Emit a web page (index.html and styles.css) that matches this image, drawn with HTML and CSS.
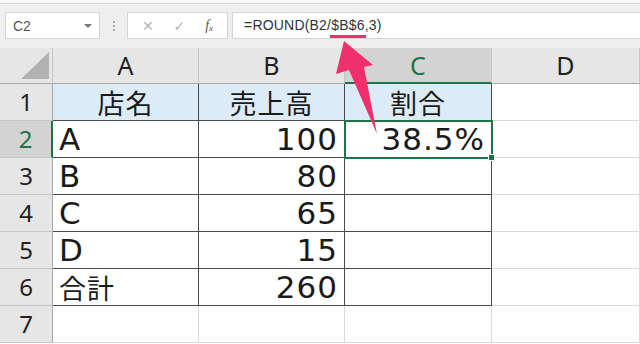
FILE: index.html
```html
<!DOCTYPE html>
<html lang="ja">
<head>
<meta charset="UTF-8"/>
<title>ROUND</title>
<link rel="stylesheet" href="styles.css">
</head>
<body>
<div class="app">
  <div class="bar">
    <div class="namebox"><span>C2</span><i class="drop"></i></div>
    <div class="grip"><b></b><b></b><b></b></div>
    <div class="btns">
      <span class="ic">&#x2715;</span>
      <span class="ic">&#x2713;</span>
      <span class="fx">f<sub>x</sub></span>
    </div>
    <div class="formula">=ROUND(B2/<u>$B$6</u>,3)</div>
  </div>

  <div class="sheet">
    <div class="hd corner"><i class="tri"></i></div>
    <div class="hd">A</div>
    <div class="hd">B</div>
    <div class="hd sel-col">C</div>
    <div class="hd">D</div>

    <div class="rh">1</div>
    <div class="c t head jp ctr">店名</div>
    <div class="c t head jp ctr">売上高</div>
    <div class="c t head jp ctr">割合</div>
    <div class="c"></div>

    <div class="rh sel-row">2</div>
    <div class="c t">A</div>
    <div class="c t num">100</div>
    <div class="c t num active">38.5%</div>
    <div class="c"></div>

    <div class="rh">3</div>
    <div class="c t">B</div>
    <div class="c t num">80</div>
    <div class="c t"></div>
    <div class="c"></div>

    <div class="rh">4</div>
    <div class="c t">C</div>
    <div class="c t num">65</div>
    <div class="c t"></div>
    <div class="c"></div>

    <div class="rh">5</div>
    <div class="c t">D</div>
    <div class="c t num">15</div>
    <div class="c t"></div>
    <div class="c"></div>

    <div class="rh">6</div>
    <div class="c t jp">合計</div>
    <div class="c t num">260</div>
    <div class="c t"></div>
    <div class="c"></div>

    <div class="rh">7</div>
    <div class="c"></div>
    <div class="c"></div>
    <div class="c"></div>
    <div class="c"></div>
  </div>

  <svg class="arrow" width="640" height="344" viewBox="0 0 640 344">
    <polygon points="344,41 373,65 364,67 377,134 349,70 336,74" fill="#f0306c"/>
  </svg>
</div>
</body>
</html>
```

FILE: styles.css
```css
*{box-sizing:border-box;margin:0;padding:0}
body{background:#fff;font-family:'Noto Sans','Noto Sans CJK JP',sans-serif;width:640px;height:344px;overflow:hidden}
.app{position:relative;width:640px;height:344px}

/* formula bar */
.bar{height:48px;background:#efefef;border-top:3px solid #f8f8f8;box-shadow:inset 0 1px 0 #d8d8d8;display:flex;align-items:flex-start;padding-top:9px}
.namebox{margin-left:5px;width:95px;height:27px;background:#fff;border:1px solid #d4d4d4;display:flex;align-items:center;justify-content:space-between;padding:0 7px 0 7px;font-family:'Liberation Sans',sans-serif;font-size:14px;color:#555}
.drop{width:0;height:0;border-left:4px solid transparent;border-right:4px solid transparent;border-top:4px solid #777}
.grip{width:27px;height:27px;display:flex;flex-direction:column;align-items:center;justify-content:center;gap:2px}
.grip b{width:2px;height:2px;background:#aaa}
.btns{width:101px;height:27px;background:#fff;border:1px solid #d4d4d4;display:flex;align-items:center;justify-content:space-around;padding:0 4px}
.ic{font-family:'DejaVu Sans',sans-serif;font-size:14px;color:#b4b4b4}
.fx{font-family:'Liberation Serif',serif;font-style:italic;font-size:14px;color:#555}
.fx sub{font-size:9px;vertical-align:-1px}
.formula{margin-left:4px;flex:1;height:27px;background:#fff;border:1px solid #d4d4d4;border-right:none;padding-left:11px;line-height:25px;font-family:'Liberation Sans',sans-serif;font-size:14px;letter-spacing:.2px;color:#333}
.formula u{text-decoration:none;padding:0 1px 5px;margin:0 -1px;background:linear-gradient(#e8336b,#e8336b) left bottom/100% 3px no-repeat}

/* grid */
.sheet{display:grid;grid-template-columns:53px 146px 146px 147px 148px;grid-template-rows:36px repeat(7,37px)}
.hd,.rh{background:#e6e6e6;border-right:1px solid #c6c6c6;border-bottom:1px solid #a8a8a8;display:flex;align-items:center;justify-content:center;color:#222;font-family:'Noto Sans',sans-serif;line-height:1}
.hd{font-size:25px}
.rh{font-size:24px;border-bottom-color:#c6c6c6;border-right-color:#a8a8a8}
.corner{position:relative}
.tri{position:absolute;right:3px;bottom:4px;width:0;height:0;border-left:28px solid transparent;border-bottom:27px solid #b2b2b2}
.sel-col{background:#d3d3d3;color:#217346;border-bottom:2px solid #217346}
.sel-row{background:#d3d3d3;color:#217346;border-right:2px solid #217346}

.c{border-right:1px solid #dadada;border-bottom:1px solid #dadada;display:flex;align-items:center;padding:0 6px 0 6px;font-family:'DejaVu Sans',sans-serif;font-size:31px;line-height:1;letter-spacing:1px;color:#1a1a1a;white-space:nowrap}
.c.t{border-right-color:#4a4a4a;border-bottom-color:#4a4a4a}
.head{background:#ddebf7}
.jp{font-family:'Noto Sans CJK JP',sans-serif;font-size:27px;letter-spacing:1px}
.ctr{justify-content:center}
.num{justify-content:flex-end}
.active{position:relative}
.active::after{content:"";position:absolute;left:-1px;top:-1px;right:-2px;bottom:-2px;border:2px solid #217346}
.active::before{content:"";position:absolute;right:-4px;bottom:-4px;width:5px;height:5px;background:#217346;border:1px solid #fff;z-index:1}

.arrow{position:absolute;left:0;top:0;pointer-events:none}
```
